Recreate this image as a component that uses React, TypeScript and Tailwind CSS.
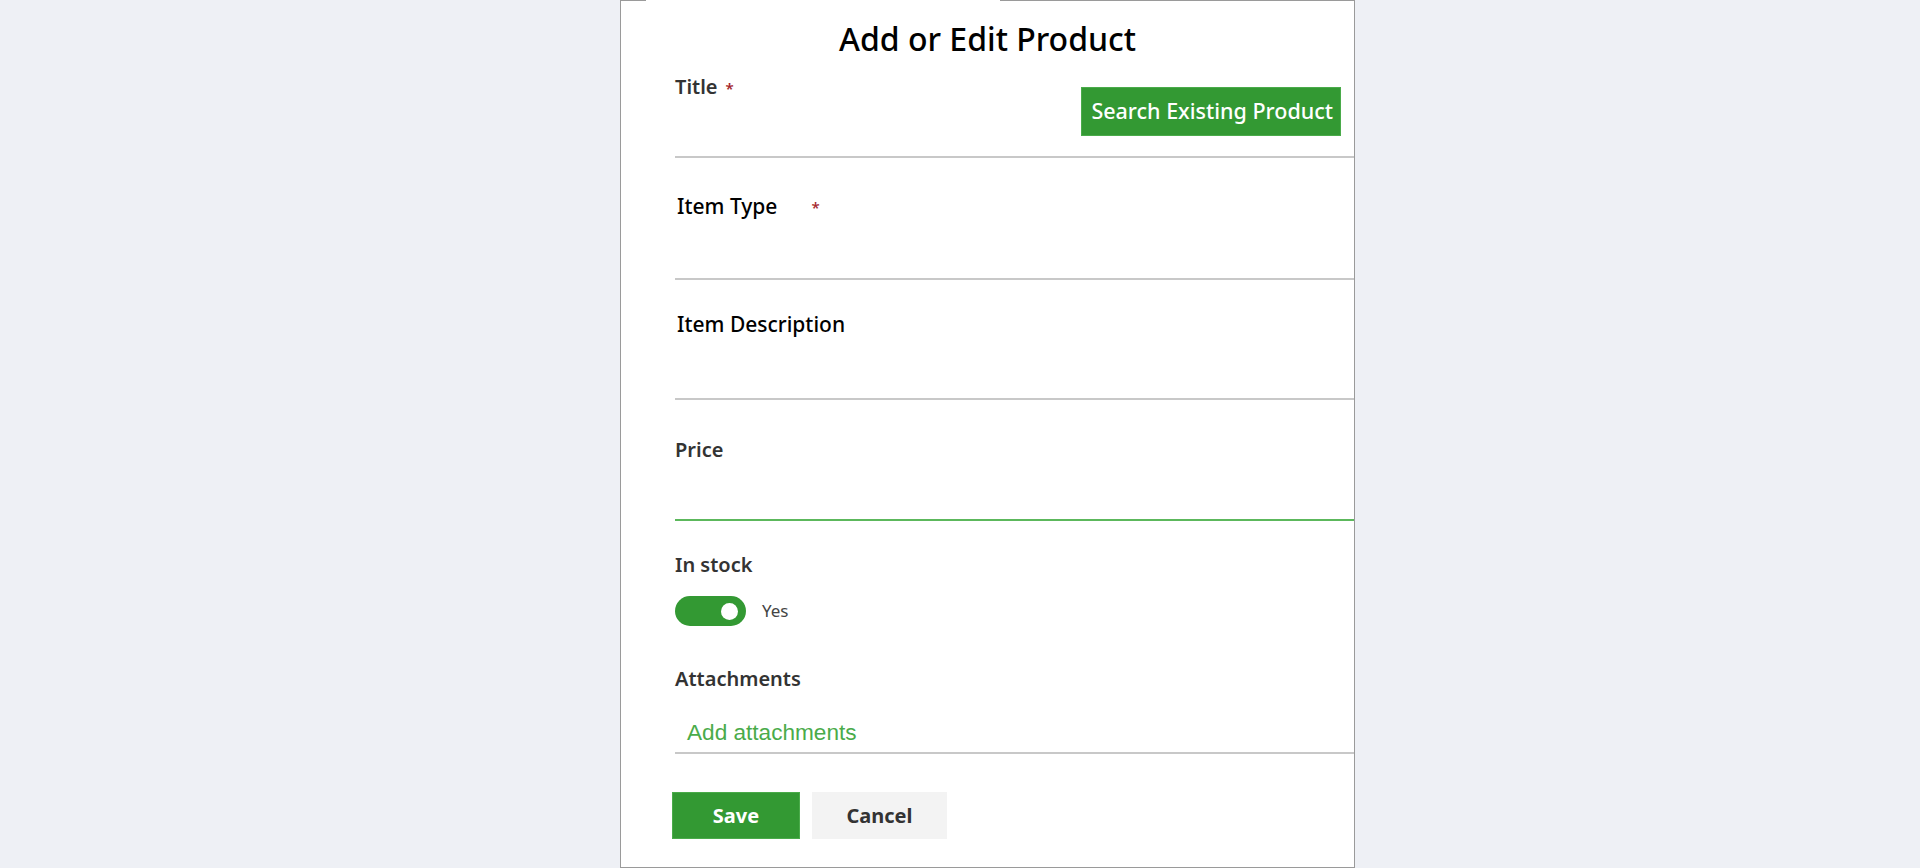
import React, { useState } from 'react'

const font = "font-['Noto_Sans',sans-serif]"

function Req() {
  return <span className='text-[#a4262c] text-[15px] align-top ml-[8px] relative top-[1px]'>*</span>
}

export default function App() {
  const [inStock, setInStock] = useState(true)

  return (
    <div className={`min-h-[868px] w-full bg-[#eef0f5] ${font}`}>
      <div className='relative ml-[620px] w-[735px] h-[868px] bg-white border border-[#9a9a9a]'>
        {/* top edge of the panel is cut open */}
        <div className='absolute -top-px left-[25px] w-[354px] h-[2px] bg-white'></div>

        <h1 className='pt-[18px] h-[64px] text-center text-[32px] leading-[40px] font-medium text-black'>
          Add or Edit Product
        </h1>

        <div className='pl-[54px]'>
          {/* Title */}
          <div className='h-[93px] pt-[8px] border-b-2 border-[#c8c8c8] flex justify-between items-start'>
            <label className='text-[20px] leading-[28px] font-semibold text-[#333]'>
              Title<Req />
            </label>
            <button className='mt-[14px] mr-[13px] h-[49px] pl-[9px] pr-[7px] bg-[#339933] border border-[#4aab4a] text-white text-[21.5px] font-medium'>
              Search Existing Product
            </button>
          </div>

          {/* Item Type */}
          <div className='h-[122px] pt-[34px] pl-[2px] border-b-2 border-[#c8c8c8]'>
            <label className='text-[21px] leading-[28px] font-medium text-black'>
              Item Type<span className='text-[#a4262c] text-[15px] align-top ml-[34px] relative top-[1px]'>*</span>
            </label>
          </div>

          {/* Item Description */}
          <div className='h-[120px] pt-[30px] pl-[2px] border-b-2 border-[#c8c8c8]'>
            <label className='text-[21px] leading-[28px] font-medium text-black'>Item Description</label>
          </div>

          {/* Price */}
          <div className='h-[121px] pt-[36px] border-b-2 border-[#5cb85c]'>
            <label className='text-[20px] leading-[28px] font-semibold text-[#333]'>Price</label>
          </div>

          {/* In stock */}
          <div className='pt-[30px]'>
            <div className='text-[20px] leading-[28px] font-semibold text-[#333]'>In stock</div>
            <div className='mt-[17px] flex items-center gap-[16px]'>
              <button
                onClick={() => setInStock(!inStock)}
                className={inStock
                  ? 'w-[71px] h-[30px] rounded-full bg-[#339933] flex items-center justify-end pr-[8px]'
                  : 'w-[71px] h-[30px] rounded-full bg-[#c8c8c8] flex items-center justify-start pl-[8px]'}
              >
                <span className='w-[17px] h-[17px] rounded-full bg-white'></span>
              </button>
              <span className='text-[17px] text-[#444]'>{inStock ? 'Yes' : 'No'}</span>
            </div>
          </div>

          {/* Attachments */}
          <div className='pt-[39px]'>
            <div className='text-[20px] leading-[28px] font-semibold text-[#333]'>Attachments</div>
            <div className='mt-[26px] pb-[5px] pl-[12px] border-b-2 border-[#c8c8c8]'>
              <a className="font-['Liberation_Sans',Arial,sans-serif] text-[22.6px] leading-[28px] text-[#4aab4a] cursor-pointer">Add attachments</a>
            </div>
          </div>

          <div className='mt-[38px] -ml-[3px] flex gap-[12px]'>
            <button className='w-[128px] h-[47px] bg-[#339933] border border-[#4aab4a] text-white text-[20px] font-bold'>Save</button>
            <button className='w-[135px] h-[47px] bg-[#f3f3f3] text-[#333] text-[20px] font-bold'>Cancel</button>
          </div>
        </div>
      </div>
    </div>
  )
}
